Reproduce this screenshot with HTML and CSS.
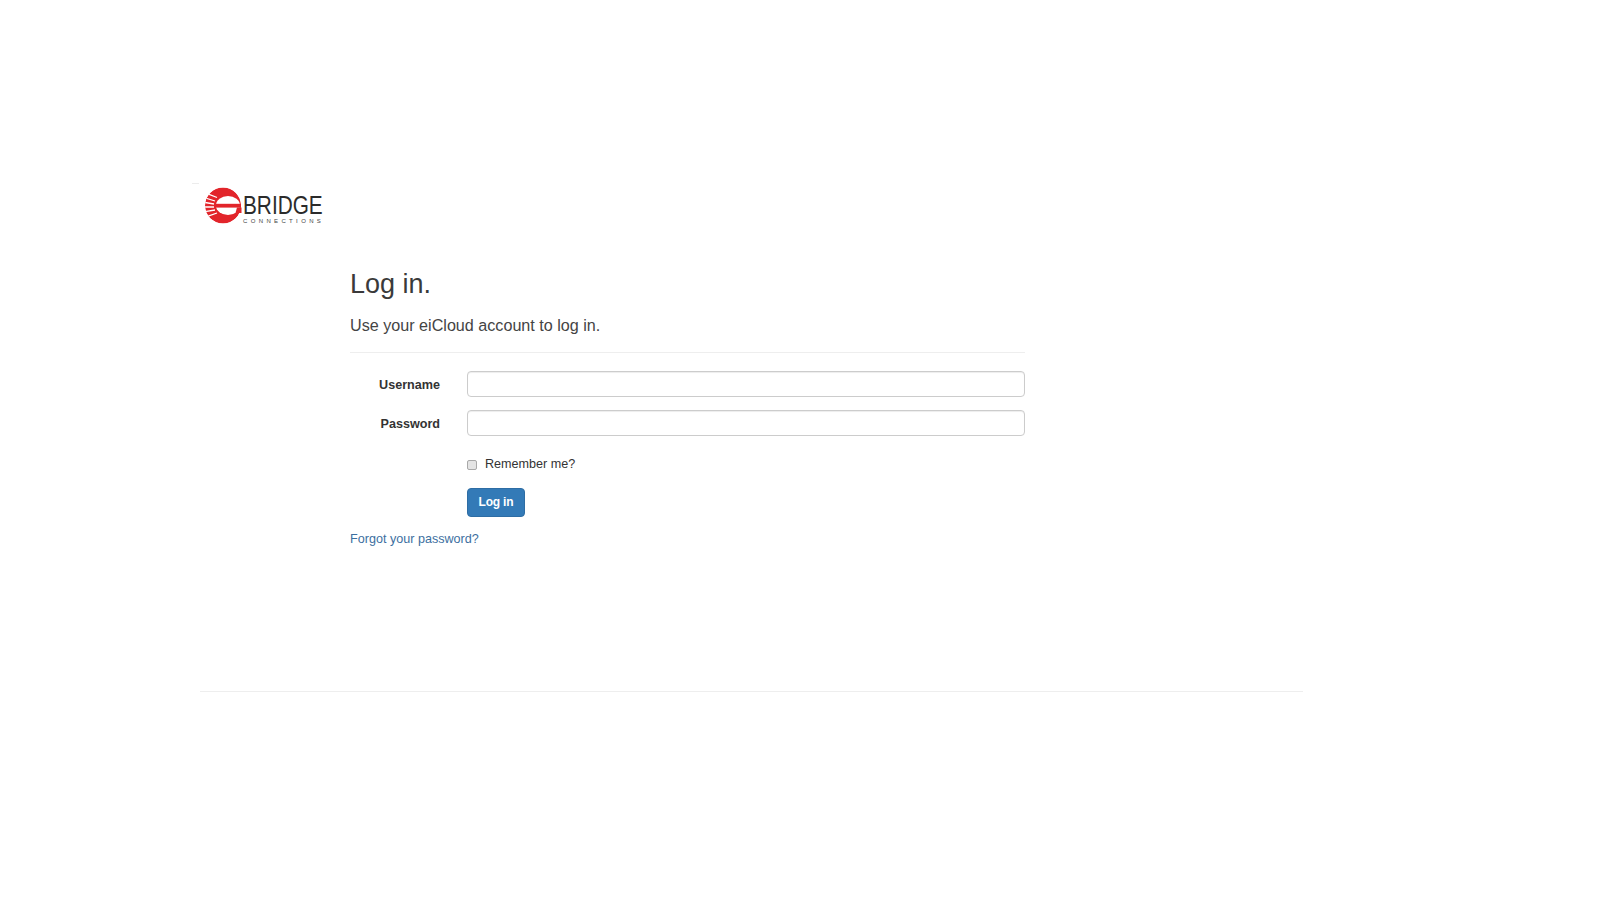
FILE: index.html
```html
<!DOCTYPE html>
<html lang="en">
<head>
<meta charset="utf-8">
<title>Log in</title>
<link rel="stylesheet" href="styles.css">
</head>
<body>
<div class="page">
  <a class="logo" href="#" aria-label="eBridge Connections">
    <svg class="logo-svg" width="124" height="42" viewBox="0 0 124 42">
      <defs>
        <clipPath id="sun"><circle cx="21" cy="21.5" r="18"/></clipPath>
      </defs>
      <path d="M-10 -.5H-3" stroke="#ececec" stroke-width="1"/>
      <g clip-path="url(#sun)">
        <circle cx="21" cy="21.5" r="18" fill="#e2252b"/>
        <path d="M1 8 L15 13.500 M0 13 L13 17 M0 18 L12 20 M0 23 L12 23 M0 28 L13 26 M1 34 L15 29" stroke="#fff" stroke-width="1.300"/>
      </g>
      <ellipse cx="26" cy="21.500" rx="12" ry="9.500" fill="#fff"/>
      <path d="M14 19.800 H39 V23.600 H14Z" fill="#e2252b"/>
      <path d="M35 23.600 L39.500 23.600 L39.500 29 L33.500 29Z" fill="#e2252b"/>
      <text class="logo-main" transform="translate(41 30) scale(.8 1)">BRIDGE</text>
      <text class="logo-sub" x="41" y="38.500">CONNECTIONS</text>
    </svg>
  </a>
  <main class="login">
    <h2 class="title">Log in.</h2>
    <h4 class="subtitle">Use your eiCloud account to log in.</h4>
    <hr class="rule">
    <form class="form">
      <div class="row">
        <label class="label" for="u">Username</label>
        <input class="input" id="u" type="text">
      </div>
      <div class="row">
        <label class="label" for="p">Password</label>
        <input class="input" id="p" type="password">
      </div>
      <div class="row remember-row">
        <span class="spacer"></span>
        <label class="remember"><input class="check" type="checkbox"><span>Remember me?</span></label>
      </div>
      <div class="row button-row">
        <span class="spacer"></span>
        <button class="btn" type="button">Log in</button>
      </div>
    </form>
    <a class="forgot" href="#">Forgot your password?</a>
  </main>
  <hr class="footer-rule">
</div>
</body>
</html>
```

FILE: styles.css
```css
* { box-sizing: border-box; }
html, body { margin: 0; background: #fff; }
body {
  font-family: "Liberation Sans", Arial, sans-serif;
  font-size: 12.6px;
  color: #333;
}
.page {
  width: 1103px;
  margin-left: 200px;
  padding-top: 184px;
}
.logo { display: block; height: 42px; margin-left: 2px; }
.logo-svg { display: block; overflow: visible; }
.logo-main { font-family: "Liberation Sans", sans-serif; font-size: 26px; fill: #2b2b2b; }
.logo-sub { font-family: "Liberation Sans", sans-serif; font-size: 6px; letter-spacing: 3.35px; fill: #444; }
.login { width: 675px; margin-left: 150px; padding-top: 42px; }
.title { margin: 0; font-size: 27px; line-height: 32px; font-weight: 400; color: #3a3a3a; }
.subtitle { margin: 15px 0 0; font-size: 16.15px; line-height: 20px; font-weight: 400; color: #444; }
.rule { margin: 17px 0 0; border: 0; border-top: 1px solid #eee; }
.form { margin-top: 18px; }
.row { display: flex; align-items: center; gap: 27px; margin-bottom: 13px; }
.label { width: 90px; padding-top: 2px; text-align: right; font-weight: 700; }
.spacer { width: 90px; flex: none; }
.input {
  flex: 1;
  height: 26px;
  border: 1px solid #ccc;
  border-radius: 4px;
  box-shadow: inset 0 1px 1px rgba(0,0,0,.075);
  background: #fff;
}
.remember-row { margin-top: 19px; margin-bottom: 15px; }
.remember { display: flex; align-items: center; gap: 8px; line-height: 18px; }
.check {
  appearance: none;
  margin: 2px 0 0;
  width: 10px;
  height: 10px;
  background: #e4e4e4;
  border: 1px solid #a9a9a9;
  border-radius: 2px;
}
.button-row { margin-bottom: 0; }
.btn {
  width: 58px;
  height: 29px;
  background: #337ab7;
  color: #fff;
  border: 1px solid #2e6da4;
  border-radius: 4px;
  font: 700 12px "Liberation Sans", Arial, sans-serif;
  letter-spacing: -.2px;
  padding: 0 0 2px;
}
.forgot { display: block; margin-top: 14px; color: #3d6f9f; text-decoration: none; line-height: 16px; }
.footer-rule { margin: 144px 0 0; border: 0; border-top: 1px solid #eee; }
```
